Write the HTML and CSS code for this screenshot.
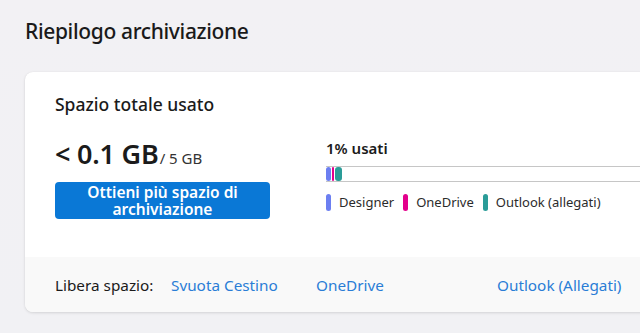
FILE: index.html
```html
<!DOCTYPE html>
<html lang="it">
<head>
<meta charset="utf-8">
<link rel="stylesheet" href="styles.css">
</head>
<body>
<div class="page">
  <h1 class="title">Riepilogo archiviazione</h1>
  <section class="card">
    <div class="card-main">
      <h2 class="card-heading">Spazio totale usato</h2>
      <div class="columns">
        <div class="col-left">
          <div class="usage"><span class="usage-big">&lt; 0.1 GB</span><span class="usage-total">/ 5 GB</span></div>
          <button class="btn-primary">Ottieni più spazio di archiviazione</button>
        </div>
        <div class="col-right">
          <div class="percent">1% usati</div>
          <div class="bar">
            <span class="seg seg-designer"></span>
            <span class="seg seg-onedrive"></span>
            <span class="seg seg-outlook"></span>
          </div>
          <ul class="legend">
            <li class="legend-item"><span class="dot dot-designer"></span>Designer</li>
            <li class="legend-item"><span class="dot dot-onedrive"></span>OneDrive</li>
            <li class="legend-item"><span class="dot dot-outlook"></span>Outlook (allegati)</li>
          </ul>
        </div>
      </div>
    </div>
    <div class="card-footer">
      <span class="footer-label">Libera spazio:</span>
      <a class="link link-trash" href="#">Svuota Cestino</a>
      <a class="link link-onedrive" href="#">OneDrive</a>
      <a class="link link-outlook" href="#">Outlook (Allegati)</a>
    </div>
  </section>
</div>
</body>
</html>
```
FILE: styles.css
```css
html, body {
  margin: 0;
  padding: 0;
  height: 100%;
}
body {
  background: linear-gradient(180deg, #f2f1f4 0%, #f1f1f4 100%);
  font-family: "Noto Sans", "Open Sans", sans-serif;
  color: #1b1b1b;
  overflow: hidden;
}
.page {
  padding: 16px 0 0 25px;
}
.title {
  margin: 0;
  font-size: 21px;
  font-weight: 500;
  line-height: 30px;
  letter-spacing: -0.35px;
  color: #1a1a1a;
}
.card {
  margin-top: 26px;
  width: 720px;
  background: #fff;
  border-radius: 8px;
  box-shadow: 0 1px 3px rgba(0,0,0,0.12), 0 0 1px rgba(0,0,0,0.08);
  overflow: hidden;
}
.card-main {
  padding: 20px 30px 38px 30px;
}
.card-heading {
  margin: 0;
  font-size: 17.5px;
  font-weight: 500;
  line-height: 24px;
}
.columns {
  display: flex;
  margin-top: 20px;
}
.col-left {
  width: 271px;
  flex: none;
}
.usage {
  display: flex;
  align-items: baseline;
  height: 38px;
  line-height: 36px;
}
.usage-big {
  font-size: 27px;
  font-weight: 600;
  letter-spacing: -0.2px;
}
.usage-total {
  font-size: 15px;
  color: #333;
  margin-left: 1px;
}
.btn-primary {
  display: block;
  margin-top: 8px;
  width: 215px;
  height: 37px;
  padding: 1px 8px 0;
  border: none;
  border-radius: 4px;
  background: #0a78d6;
  color: #fff;
  font-family: inherit;
  font-size: 15.5px;
  font-weight: 600;
  line-height: 17px;
}
.col-right {
  flex: 1;
}
.percent {
  font-size: 15px;
  font-weight: 600;
  line-height: 20px;
  margin-top: 2px;
}
.bar {
  display: flex;
  align-items: center;
  height: 14px;
  margin-top: 8px;
  border-top: 1px solid #c6c6c6;
  border-bottom: 1px solid #c6c6c6;
}
.seg {
  height: 14px;
  border-radius: 3px;
}
.seg-designer { width: 5px; background: #6c7ff1; }
.seg-onedrive { width: 2px; background: #e3008c; border-radius: 1px; margin-left: 1px; }
.seg-outlook { width: 7px; background: #2a9c98; margin-left: 1px; }
.legend {
  list-style: none;
  display: flex;
  gap: 9px;
  margin: 11px 0 0;
  padding: 0;
}
.legend-item {
  display: flex;
  align-items: center;
  font-size: 13px;
  line-height: 18px;
  color: #2b2b2b;
}
.dot {
  width: 5px;
  height: 17px;
  border-radius: 3px;
  margin-right: 8px;
}
.dot-designer { background: #6c7ff1; }
.dot-onedrive { background: #e3008c; }
.dot-outlook { background: #2a9c98; }
.card-footer {
  display: flex;
  align-items: center;
  height: 55px;
  padding-left: 30px;
  background: #f9f9f9;
  font-size: 15.3px;
}
.footer-label {
  color: #1b1b1b;
  width: 116px;
}
.link {
  color: #2a7dd6;
  text-decoration: none;
}
.link-trash { width: 145px; }
.link-onedrive { width: 181px; }
```
